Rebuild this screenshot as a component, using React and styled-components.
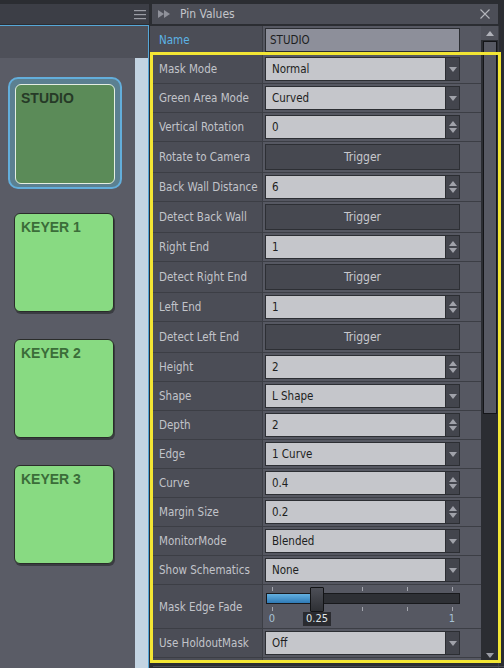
import React from 'react';
import styled, { createGlobalStyle } from 'styled-components';

const Global = createGlobalStyle`
  html, body { margin: 0; padding: 0; background: #2b2d32; overflow: hidden; }
  body { font-family: "DejaVu Sans Condensed", "DejaVu Sans", sans-serif; }
  * { box-sizing: border-box; }
`;

const Root = styled.div`
  position: relative;
  width: 504px;
  height: 668px;
  padding-top: 4px;
  display: flex;
  background: #2b2d32;
  overflow: hidden;
`;

/* ---------- left panel ---------- */
const LeftPanel = styled.div`
  width: 149px;
  flex-shrink: 0;
  display: flex;
  flex-direction: column;
`;

const LeftHeader = styled.div`
  height: 20px;
  background: #3c3e46;
  display: flex;
  align-items: center;
  justify-content: flex-end;
  padding-right: 3px;
`;

const LeftBody = styled.div`
  flex: 1;
  margin-top: 1px;
  border-top: 1px solid #56a7d8;
  border-right: 1px solid #56a7d8;
  display: flex;
  flex-direction: column;
`;

const LeftToolbar = styled.div`
  height: 32px;
  background: #4e5059;
`;

const PadArea = styled.div`
  flex: 1;
  display: flex;
`;

const PadColumn = styled.div`
  flex: 1;
  background: #5a5c66;
  padding: 19px 0 0 8px;
  display: flex;
  flex-direction: column;
  gap: 27px;
`;

const PadScroll = styled.div`
  width: 13px;
  background: #c3d4e2;
`;

const SelectedRing = styled.div`
  width: 114px;
  height: 112px;
  padding: 5px;
  border: 2px solid #63aedb;
  border-radius: 10px;
  background: #5b8091;
  margin-bottom: -3px;
`;

const Pad = styled.div`
  width: 100px;
  height: ${p => (p.$selected ? '100px' : '99px')};
  margin-left: ${p => (p.$selected ? '0' : '6px')};
  border-radius: 6px;
  border: ${p => (p.$selected ? '1.5px solid #e4eee2' : '1.5px solid #2a2c2a')};
  background: ${p => (p.$selected ? '#5b8b58' : '#88da82')};
  box-shadow: ${p => (p.$selected ? 'none' : '1px 2px 0 rgba(0,0,0,0.35)')};
  padding: ${p => (p.$selected ? '5px 5px' : '5px 6px')};
  font-family: "Liberation Sans", Arial, sans-serif;
  font-weight: bold;
  font-size: 14px;
  line-height: 16px;
  color: ${p => (p.$selected ? '#263a27' : '#3b6d39')};
`;

/* ---------- right panel ---------- */
const RightPanel = styled.div`
  width: 348px;
  flex-shrink: 0;
  display: flex;
  flex-direction: column;
  margin-left: 1px;
`;

const RightHeader = styled.div`
  height: 20px;
  margin-left: 2px;
  margin-bottom: 2px;
  background: #4c4e57;
  display: flex;
  align-items: center;
  padding: 0 8px 0 6px;
  gap: 9px;
`;

const Title = styled.span`
  flex: 1;
  font-size: 12px;
  color: #c3c5ca;
`;

const Body = styled.div`
  height: 636px;
  display: flex;
  overflow: hidden;
`;

const Rows = styled.div`
  width: 331px;
  display: flex;
  flex-direction: column;
`;

const Row = styled.div`
  flex-shrink: 0;
  height: ${p => p.$h}px;
  display: flex;
  border-bottom: 1px solid #3c3e45;
`;

const Label = styled.div`
  width: 113px;
  flex-shrink: 0;
  background: #4b4d56;
  border-right: 1px solid #3c3e45;
  padding-left: 9px;
  display: flex;
  align-items: center;
  font-size: 11.5px;
  color: ${p => (p.$accent ? '#5cb3e5' : '#c2c4ca')};
  white-space: nowrap;
`;

const Value = styled.div`
  flex: 1;
  background: #565862;
  padding: 0 21px 0 2px;
  display: flex;
  align-items: center;
  position: relative;
`;

const Field = styled.div`
  width: 195px;
  height: 24px;
  display: flex;
  border: 1px solid #2c2e33;
  background: ${p => p.$bg};
`;

const FieldText = styled.div`
  flex: 1;
  display: flex;
  align-items: center;
  padding-left: ${p => p.$pad || 6}px;
  font-size: 11.5px;
  color: #1d1e21;
`;

const SideButton = styled.div`
  width: 14px;
  background: #43454d;
  border-left: 1px solid #2c2e33;
  display: flex;
  flex-direction: column;
  align-items: center;
  justify-content: center;
  gap: 2px;
`;

const TriggerButton = styled.div`
  width: 195px;
  height: 26px;
  border: 1px solid #2d2f34;
  background: #464850;
  display: flex;
  align-items: center;
  justify-content: center;
  font-size: 12px;
  color: #c8c9ce;
`;

/* slider */
const SliderBox = styled.div`
  position: relative;
  align-self: stretch;
  width: 194px;
  margin-left: 1px;
`;

const Ticks = styled.div`
  position: absolute;
  top: ${p => p.$top}px;
  left: 6px;
  width: 181px;
  height: 4px;
  display: flex;
  justify-content: space-between;
`;

const Tick = styled.span`
  width: 1px;
  height: 4px;
  background: #a3a5ad;
`;

const Track = styled.div`
  position: absolute;
  top: 8px;
  left: 0;
  width: 194px;
  height: 11px;
  background: #2e3035;
  border: 1px solid #18191c;
  overflow: hidden;
`;

const Fill = styled.div`
  height: 100%;
  background: linear-gradient(#63b0e0, #2f7ab6);
`;

const Thumb = styled.div`
  position: absolute;
  top: 2px;
  width: 14px;
  height: 25px;
  border: 1px solid #131416;
  border-radius: 1px;
  background: linear-gradient(#4d4f57, #2e3035);
`;

const TickLabel = styled.span`
  position: absolute;
  top: 27px;
  height: 14px;
  transform: translateX(-50%);
  font-size: 11px;
  line-height: 14px;
  color: ${p => (p.$current ? '#dfe3e7' : '#a7c1d4')};
  background: ${p => (p.$current ? '#2a2b30' : 'transparent')};
  padding: 0 ${p => (p.$current ? '3px' : '0')};
`;

/* scrollbar */
const ScrollBar = styled.div`
  width: 17px;
  flex-shrink: 0;
  background: #2b2d32;
  display: flex;
  flex-direction: column;
`;

const ScrollArrow = styled.div`
  height: 14px;
  background: ${p => (p.$bg ? '#50525b' : 'transparent')};
  display: flex;
  align-items: center;
  justify-content: center;
`;

const ScrollThumb = styled.div`
  height: 373px;
  margin: 1px 1px 0 2px;
  background: #575963;
  border: 1px solid #141518;
`;

const ScrollRest = styled.div`
  flex: 1;
`;

const FarStrip = styled.div`
  flex: 1;
  margin-top: 22px;
  border-left: 1px solid #3c3e45;
  background: #2b2d32;
`;

const Highlight = styled.div`
  position: absolute;
  left: 150px;
  top: 52px;
  width: 351px;
  height: 611px;
  border: 3px solid #f3e634;
  pointer-events: none;
`;

const BottomLine = styled.div`
  position: absolute;
  left: 153px;
  right: 0;
  bottom: 1px;
  height: 1px;
  background: #4a4c54;
`;

/* icons */
const Hamburger = () => (
  <svg width="12" height="11" viewBox="0 0 12 11">
    <rect x="0" y="1" width="12" height="1.2" fill="#9a9ca4" />
    <rect x="0" y="5" width="12" height="1.2" fill="#9a9ca4" />
    <rect x="0" y="9" width="12" height="1.2" fill="#9a9ca4" />
  </svg>
);

const DoubleArrow = () => (
  <svg width="13" height="8" viewBox="0 0 13 8">
    <polygon points="0,0 6,4 0,8" fill="#8f919a" />
    <polygon points="6,0 12,4 6,8" fill="#8f919a" />
  </svg>
);

const CloseIcon = () => (
  <svg width="10" height="10" viewBox="0 0 10 10">
    <path d="M0.5 0.5 L9.5 9.5 M9.5 0.5 L0.5 9.5" stroke="#b4b6bc" strokeWidth="1.1" />
  </svg>
);

const Down = ({ c = '#a0a2aa' }) => (
  <svg width="8" height="5" viewBox="0 0 8 5">
    <polygon points="0,0 8,0 4,5" fill={c} />
  </svg>
);

const Up = ({ c = '#a0a2aa' }) => (
  <svg width="8" height="5" viewBox="0 0 8 5">
    <polygon points="0,5 8,5 4,0" fill={c} />
  </svg>
);

const Slider = ({ value, labels = true }) => {
  const pos = 6 + value * 180;
  return (
    <SliderBox>
      <Ticks $top={2}>{[0, 1, 2, 3, 4].map(i => <Tick key={i} />)}</Ticks>
      <Track><Fill style={{ width: `${pos - 1}px` }} /></Track>
      <Ticks $top={22}>{[0, 1, 2, 3, 4].map(i => <Tick key={i} />)}</Ticks>
      <Thumb style={{ left: `${pos - 7}px` }} />
      {labels && (
        <>
          <TickLabel style={{ left: '6px' }}>0</TickLabel>
          <TickLabel $current style={{ left: `${pos}px` }}>{value}</TickLabel>
          <TickLabel style={{ left: '186px' }}>1</TickLabel>
        </>
      )}
    </SliderBox>
  );
};

const rows = [
  { label: 'Mask Mode', type: 'select', value: 'Normal' },
  { label: 'Green Area Mode', type: 'select', value: 'Curved' },
  { label: 'Vertical Rotation', type: 'number', value: '0' },
  { label: 'Rotate to Camera', type: 'trigger' },
  { label: 'Back Wall Distance', type: 'number', value: '6' },
  { label: 'Detect Back Wall', type: 'trigger' },
  { label: 'Right End', type: 'number', value: '1' },
  { label: 'Detect Right End', type: 'trigger' },
  { label: 'Left End', type: 'number', value: '1' },
  { label: 'Detect Left End', type: 'trigger' },
  { label: 'Height', type: 'number', value: '2' },
  { label: 'Shape', type: 'select', value: 'L Shape' },
  { label: 'Depth', type: 'number', value: '2' },
  { label: 'Edge', type: 'select', value: '1 Curve' },
  { label: 'Curve', type: 'number', value: '0.4' },
  { label: 'Margin Size', type: 'number', value: '0.2' },
  { label: 'MonitorMode', type: 'select', value: 'Blended' },
  { label: 'Show Schematics', type: 'select', value: 'None' },
  { label: 'Mask Edge Fade', type: 'slider', value: 0.25 },
  { label: 'Use HoldoutMask', type: 'select', value: 'Off' },
  { label: '', type: 'slider', value: 0.5, hidden: true },
];

const heights = { select: 29, number: 29, trigger: 31, slider: 44 };

const renderValue = r => {
  if (r.type === 'trigger') return <TriggerButton>Trigger</TriggerButton>;
  if (r.type === 'slider') return <Slider value={r.value} labels={!r.hidden} />;
  return (
    <Field $bg="#c5c6cb">
      <FieldText>{r.value}</FieldText>
      <SideButton>
        {r.type === 'select' ? <Down /> : (<><Up /><Down /></>)}
      </SideButton>
    </Field>
  );
};

export default function App() {
  return (
    <>
      <Global />
      <Root>
        <LeftPanel>
          <LeftHeader><Hamburger /></LeftHeader>
          <LeftBody>
            <LeftToolbar />
            <PadArea>
              <PadColumn>
                <SelectedRing><Pad $selected>STUDIO</Pad></SelectedRing>
                <Pad>KEYER 1</Pad>
                <Pad>KEYER 2</Pad>
                <Pad>KEYER 3</Pad>
              </PadColumn>
              <PadScroll />
            </PadArea>
          </LeftBody>
        </LeftPanel>

        <RightPanel>
          <RightHeader>
            <DoubleArrow />
            <Title>Pin Values</Title>
            <CloseIcon />
          </RightHeader>
          <Body>
            <Rows>
              <Row $h={29}>
                <Label $accent>Name</Label>
                <Value>
                  <Field $bg="#8d8f9a"><FieldText $pad={4}>STUDIO</FieldText></Field>
                </Value>
              </Row>
              {rows.map((r, i) => (
                <Row key={i} $h={heights[r.type]}>
                  <Label>{r.label}</Label>
                  <Value>{renderValue(r)}</Value>
                </Row>
              ))}
            </Rows>
            <ScrollBar>
              <ScrollArrow $bg><Up c="#b0b2b9" /></ScrollArrow>
              <ScrollThumb />
              <ScrollRest />
              <ScrollArrow><Down c="#9a9ca4" /></ScrollArrow>
            </ScrollBar>
          </Body>
        </RightPanel>
        <FarStrip />
        <Highlight />
        <BottomLine />
      </Root>
    </>
  );
}
